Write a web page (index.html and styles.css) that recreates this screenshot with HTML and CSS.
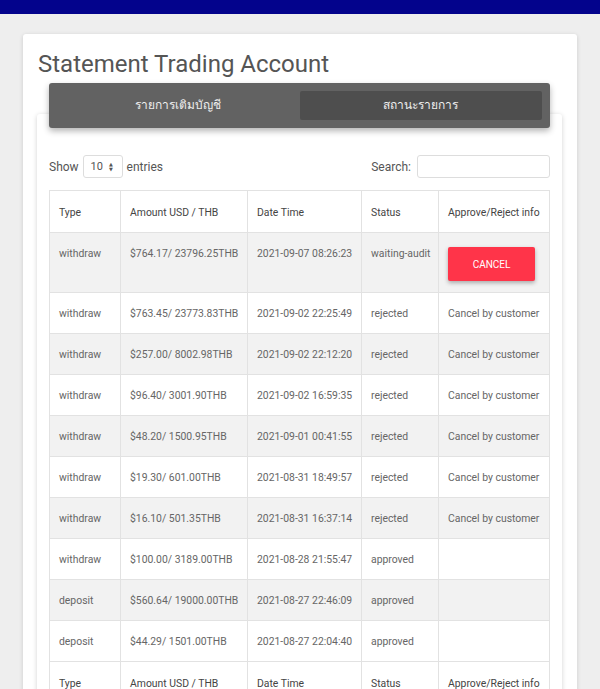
FILE: index.html
```html
<!DOCTYPE html>
<html lang="th">
<head>
  <meta charset="UTF-8">
  <title>Statement Trading Account</title>
  <link rel="stylesheet" href="styles.css">
</head>
<body>

  <div class="topbar"></div>

  <div class="card">
    <h1 class="title">Statement Trading Account</h1>

    <div class="inner-card">
      <div class="tabs">
        <div class="tab">รายการเติมบัญชี</div>
        <div class="tab active">สถานะรายการ</div>
      </div>

      <div class="controls">
        <label class="length">
          Show
          <span class="select">10 <span class="arrows">&#9650;<br>&#9660;</span></span>
          entries
        </label>
        <label class="search">
          Search: <input type="text">
        </label>
      </div>

      <table class="statement">
        <colgroup>
          <col style="width: 71px">
          <col style="width: 127px">
          <col style="width: 114px">
          <col style="width: 77px">
          <col>
        </colgroup>
        <thead>
          <tr>
            <th>Type</th>
            <th>Amount USD / THB</th>
            <th>Date Time</th>
            <th>Status</th>
            <th>Approve/Reject info</th>
          </tr>
        </thead>
        <tbody>
          <tr>
            <td>withdraw</td>
            <td>$764.17/ 23796.25THB</td>
            <td>2021-09-07 08:26:23</td>
            <td>waiting-audit</td>
            <td><button class="cancel-btn">CANCEL</button></td>
          </tr>
          <tr>
            <td>withdraw</td>
            <td>$763.45/ 23773.83THB</td>
            <td>2021-09-02 22:25:49</td>
            <td>rejected</td>
            <td>Cancel by customer</td>
          </tr>
          <tr>
            <td>withdraw</td>
            <td>$257.00/ 8002.98THB</td>
            <td>2021-09-02 22:12:20</td>
            <td>rejected</td>
            <td>Cancel by customer</td>
          </tr>
          <tr>
            <td>withdraw</td>
            <td>$96.40/ 3001.90THB</td>
            <td>2021-09-02 16:59:35</td>
            <td>rejected</td>
            <td>Cancel by customer</td>
          </tr>
          <tr>
            <td>withdraw</td>
            <td>$48.20/ 1500.95THB</td>
            <td>2021-09-01 00:41:55</td>
            <td>rejected</td>
            <td>Cancel by customer</td>
          </tr>
          <tr>
            <td>withdraw</td>
            <td>$19.30/ 601.00THB</td>
            <td>2021-08-31 18:49:57</td>
            <td>rejected</td>
            <td>Cancel by customer</td>
          </tr>
          <tr>
            <td>withdraw</td>
            <td>$16.10/ 501.35THB</td>
            <td>2021-08-31 16:37:14</td>
            <td>rejected</td>
            <td>Cancel by customer</td>
          </tr>
          <tr>
            <td>withdraw</td>
            <td>$100.00/ 3189.00THB</td>
            <td>2021-08-28 21:55:47</td>
            <td>approved</td>
            <td></td>
          </tr>
          <tr>
            <td>deposit</td>
            <td>$560.64/ 19000.00THB</td>
            <td>2021-08-27 22:46:09</td>
            <td>approved</td>
            <td></td>
          </tr>
          <tr>
            <td>deposit</td>
            <td>$44.29/ 1501.00THB</td>
            <td>2021-08-27 22:04:40</td>
            <td>approved</td>
            <td></td>
          </tr>
        </tbody>
        <tfoot>
          <tr>
            <th>Type</th>
            <th>Amount USD / THB</th>
            <th>Date Time</th>
            <th>Status</th>
            <th>Approve/Reject info</th>
          </tr>
        </tfoot>
      </table>
    </div>
  </div>

</body>
</html>
```

FILE: styles.css
```css
body {
  margin: 0;
  background: #eeeeee;
  font-family: Roboto, "Noto Sans", "DejaVu Sans", sans-serif;
  color: #555;
}
.topbar {
  height: 14px;
  background: #03038c;
}
.card {
  margin: 20px 23px 0;
  padding: 14px 15px 20px 14px;
  background: #fff;
  border-radius: 3px;
  box-shadow: 0 1px 4px rgba(0, 0, 0, 0.15);
}
.title {
  margin: 0 0 0 1px;
  font-size: 24px;
  line-height: 32px;
  font-weight: 400;
  color: #555;
}
.inner-card {
  display: flow-root;
  margin-top: 34px;
  padding: 0 12px 20px;
  background: #fff;
  border-radius: 3px;
  box-shadow: 0 1px 5px rgba(0, 0, 0, 0.18);
}
.tabs {
  display: flex;
  margin-top: -31px;
  padding: 8px;
  background: #626262;
  border-radius: 3px;
  box-shadow: 0 3px 6px rgba(0, 0, 0, 0.3);
}
.tab {
  flex: 1;
  height: 29px;
  line-height: 29px;
  text-align: center;
  font-size: 12px;
  color: #eee;
  border-radius: 2px;
}
.tab.active {
  background: #4e4e4e;
}
.controls {
  display: flex;
  justify-content: space-between;
  align-items: center;
  margin-top: 27px;
  margin-bottom: 12px;
  font-size: 12px;
  color: #555;
}
.length, .search {
  display: flex;
  align-items: center;
  gap: 4px;
}
.select {
  display: inline-flex;
  align-items: center;
  gap: 6px;
  box-sizing: border-box;
  width: 40px;
  height: 23px;
  padding-left: 7px;
  border: 1px solid #ddd;
  border-radius: 3px;
  font-size: 11px;
}
.arrows {
  font-size: 5px;
  line-height: 5px;
}
.search input {
  box-sizing: border-box;
  width: 133px;
  height: 23px;
  margin: 0 0 0 2px;
  border: 1px solid #ddd;
  border-radius: 3px;
}
.statement {
  width: 100%;
  border-collapse: collapse;
  table-layout: fixed;
  font-size: 10.4px;
  border: 1px solid #ddd;
}
.statement th, .statement td {
  padding: 14px 9px 13px;
  line-height: 13px;
  text-align: left;
  vertical-align: top;
  border: 1px solid #e2e2e2;
  white-space: nowrap;
}
.statement th {
  font-weight: 400;
  color: #444;
  padding: 15px 9px 13px;
}
.statement td {
  color: #666;
}
.statement tbody tr:nth-child(odd) {
  background: #f2f2f2;
}
.cancel-btn {
  display: block;
  width: 87px;
  height: 34px;
  margin-bottom: -2px;
  border: none;
  border-radius: 2px;
  background: #ff3449;
  color: #fff;
  font-family: Roboto, sans-serif;
  font-size: 10px;
  box-shadow: 0 2px 4px rgba(0, 0, 0, 0.3);
}
```
